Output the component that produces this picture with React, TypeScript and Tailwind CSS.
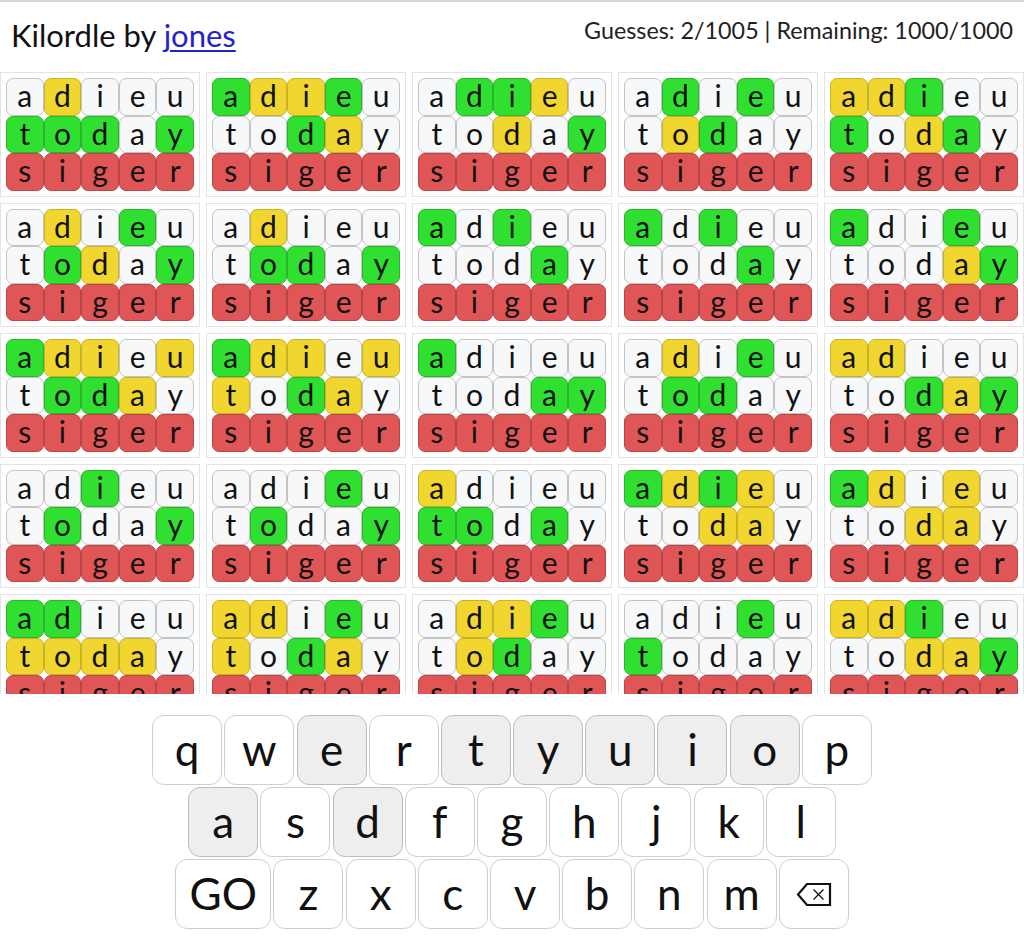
import React from "react";

const boards: [string, string][] = [
  ["WYWWW", "GGGWG"],
  ["GYYGW", "WWGYW"],
  ["WGGYW", "WWYWG"],
  ["WGWGW", "WYGWW"],
  ["YYGWW", "GWYGW"],
  ["WYWGW", "WGYWG"],
  ["WYWWW", "WGGWG"],
  ["GWGWW", "WWWGW"],
  ["GWGWW", "WWWGW"],
  ["GWWGW", "WWWYG"],
  ["GYYWY", "WGGYW"],
  ["GYYWY", "YWGYW"],
  ["GWWWW", "WWWGG"],
  ["WYWGW", "WGGWW"],
  ["YYWWW", "WWGYG"],
  ["WWGWW", "WGWWG"],
  ["WWWGW", "WGWWG"],
  ["YWWWW", "GGWGW"],
  ["GYGYW", "WWYYW"],
  ["GYWYW", "WWYYW"],
  ["GGWWW", "YYYYW"],
  ["YYWGW", "YWGYW"],
  ["WYYGW", "WYGWW"],
  ["WWWGW", "GWWWW"],
  ["YYGWW", "WWYYG"],
];

const tileClass: Record<string, string> = {
  W: "bg-[#f7f8fa] border-[#c4c4c4]",
  Y: "bg-[#f0d62e] border-[#c9b12a]",
  G: "bg-[#30e030] border-[#2bb32b]",
  R: "bg-[#e05656] border-[#b94646]",
};

function Tile({ letter, color }: { letter: string; color: string }) {
  return (
    <div
      className={`flex-1 h-[37.5px] flex items-center justify-center border rounded-[7px] text-[30px] leading-none text-[#111] ${tileClass[color]}`}
    >
      <span className="-mt-[3px]">{letter}</span>
    </div>
  );
}

function Row({ word, colors }: { word: string; colors: string }) {
  return (
    <div className="flex">
      {word.split("").map((l, i) => (
        <Tile key={i} letter={l} color={colors[i]} />
      ))}
    </div>
  );
}

function Board({ a, b }: { a: string; b: string }) {
  return (
    <div className="border border-[#e3e3e3] p-[5px] flex flex-col">
      <Row word="adieu" colors={a} />
      <Row word="today" colors={b} />
      <Row word="siger" colors="RRRRR" />
    </div>
  );
}

const used = new Set(["e", "t", "y", "u", "i", "o", "a", "d"]);

function Key({ label, wide }: { label: React.ReactNode; wide?: boolean }) {
  const isUsed = typeof label === "string" && used.has(label);
  return (
    <div
      className={`${wide ? "w-[96px]" : "w-[70px]"} h-[70px] flex items-center justify-center rounded-[12px] border text-[44px] leading-none text-[#111] ${
        isUsed ? "bg-[#eeeeee] border-[#bdbdbd]" : "bg-white border-[#cfcfcf]"
      }`}
    >
      <span className="-mt-[2px]">{label}</span>
    </div>
  );
}

function Backspace() {
  return (
    <svg width="36" height="26" viewBox="0 0 36 26" className="mt-[4px]">
      <path d="M11 2 H34 V23 H11 L2 12.5 Z" fill="none" stroke="#111" strokeWidth="2.2" strokeLinejoin="miter" />
      <path d="M17.5 7.5 L27.5 17.5 M27.5 7.5 L17.5 17.5" stroke="#111" strokeWidth="1.3" />
    </svg>
  );
}

export default function App() {
  const r1 = "qwertyuiop".split("");
  const r2 = "asdfghjkl".split("");
  const r3 = "zxcvbnm".split("");
  return (
    <div
      className="w-[1024px] h-[948px] bg-white overflow-hidden"
      style={{ fontFamily: "Lato, 'Open Sans', sans-serif" }}
    >
      <div className="h-[70px] border-t-2 border-[#d6d6d6] flex justify-between items-start px-[11px]">
        <div className="mt-[15px] text-[31px] leading-[1.2] text-[#111]">
          Kilordle by <a className="text-[#2323c8] underline underline-offset-[3px] decoration-[1.5px]" href="#">jones</a>
        </div>
        <div className="mt-[15px] text-[23.3px] leading-[1.2] text-[#222]">
          Guesses: 2/1005 | Remaining: 1000/1000
        </div>
      </div>
      <div className="h-[624px] overflow-hidden pt-[2px]">
        <div className="grid grid-cols-5 gap-x-[6px] gap-y-[6px]">
          {boards.map(([a, b], i) => (
            <Board key={i} a={a} b={b} />
          ))}
        </div>
      </div>
      <div className="mt-[21px] flex flex-col items-center gap-[2px]">
        <div className="flex gap-[2.2px]">
          {r1.map((k) => (
            <Key key={k} label={k} />
          ))}
        </div>
        <div className="flex gap-[2.2px]">
          {r2.map((k) => (
            <Key key={k} label={k} />
          ))}
        </div>
        <div className="flex gap-[2.2px]">
          <Key label="GO" wide />
          {r3.map((k) => (
            <Key key={k} label={k} />
          ))}
          <Key label={<Backspace />} />
        </div>
      </div>
    </div>
  );
}
